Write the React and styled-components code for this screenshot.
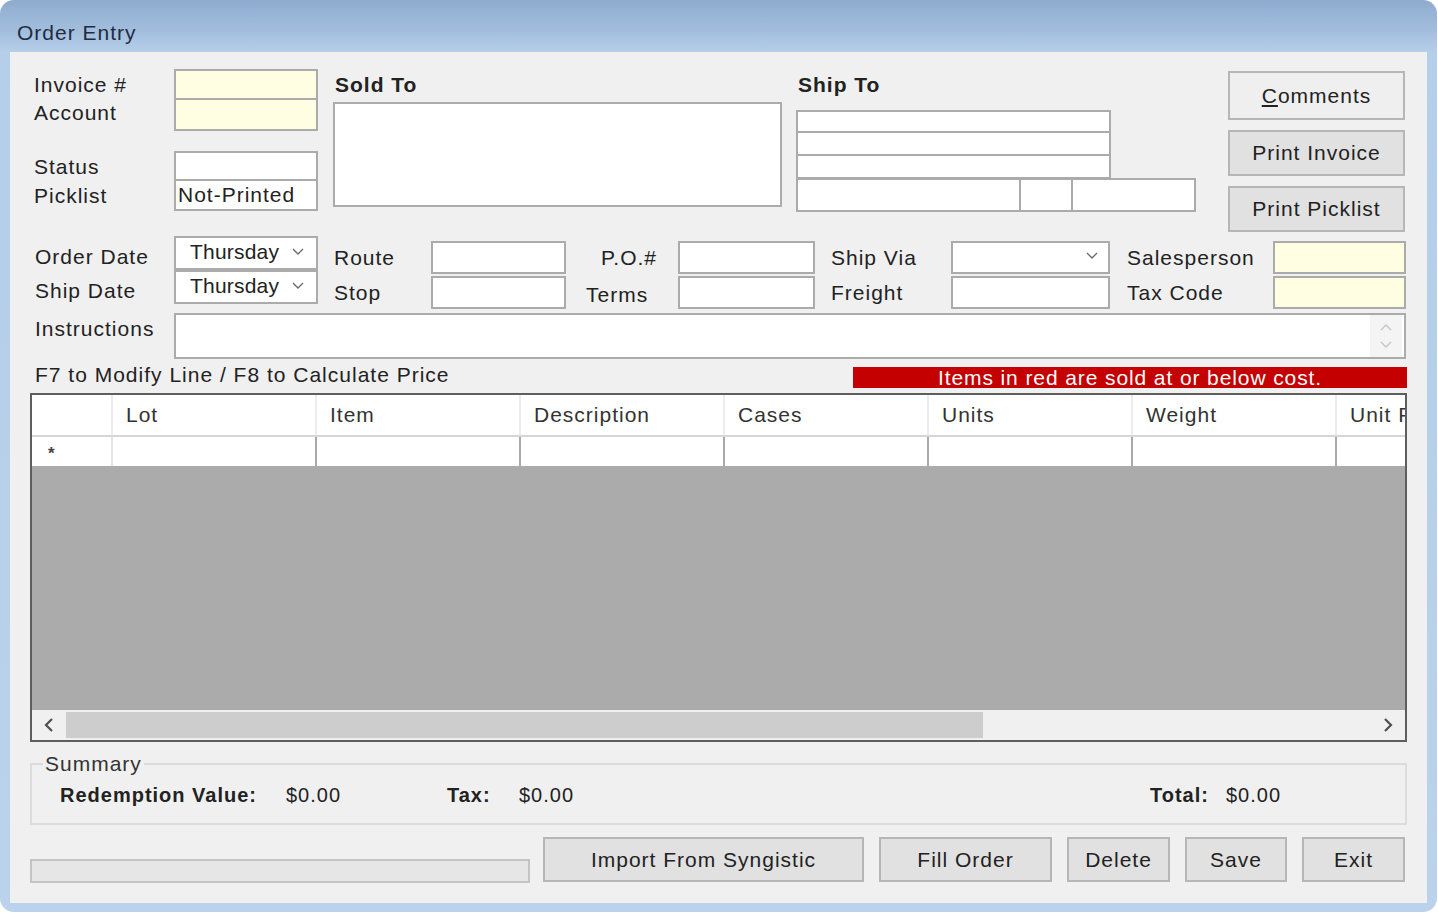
import React from 'react'
import styled, { createGlobalStyle } from 'styled-components'

const GlobalStyle = createGlobalStyle`
  html, body {
    margin: 0;
    padding: 0;
    background: #fff;
  }
  body {
    font-family: "Liberation Sans", Arial, sans-serif;
    font-size: 21px;
    letter-spacing: 1px;
    color: #222;
  }
  * { box-sizing: border-box; }
`

const Window = styled.div`
  width: 1437px;
  border-radius: 14px;
  padding: 0 10px 9px;
  display: flex;
  flex-direction: column;
  background: linear-gradient(180deg, #8eabcf 0px, #a2bddc 30px, #b5cee9 52px, #bad2eb 100%);
`

const TitleBar = styled.div`
  height: 52px;
  display: flex;
  align-items: center;
  padding: 14px 0 0 7px;
  color: #1f2d40;
`

const Client = styled.div`
  background: #f0f0f0;
  padding: 17px 20px 21px;
  display: flex;
  flex-direction: column;
`

const TopArea = styled.div`
  display: flex;
  align-items: flex-start;
  height: 163px;
`

const LeftFields = styled.div`
  display: flex;
  flex-direction: column;
  gap: 20px;
`

const Pair = styled.div`
  display: grid;
  grid-template-columns: ${p => p.$labelW}px ${p => p.$inputW}px;
  grid-auto-rows: ${p => p.$rowH}px;
  row-gap: ${p => p.$gap || 0}px;
  padding-top: ${p => p.$top || 0}px;
  margin-left: ${p => p.$ml || 0}px;
`

const Label = styled.span`
  display: flex;
  align-items: center;
  white-space: nowrap;
  padding-left: ${p => p.$indent || 0}px;
  padding-top: ${p => p.$dy || 0}px;
  padding-bottom: ${p => p.$db || 0}px;
`

const Box = styled.div`
  border: 2px solid #ababab;
  ${p => p.$joined && 'border-top: none;'}
  background: ${p => (p.$yellow ? '#fffee2' : '#fff')};
  width: ${p => (p.$w ? `${p.$w}px` : 'auto')};
  height: ${p => (p.$h ? `${p.$h}px` : 'auto')};
  display: flex;
  align-items: center;
  padding-left: 2px;
  overflow: hidden;
  white-space: nowrap;
`

const Block = styled.div`
  display: flex;
  flex-direction: column;
  width: ${p => p.$w}px;
  margin-left: ${p => p.$ml}px;
`

const Heading = styled.div`
  height: 32px;
  display: flex;
  align-items: center;
  font-weight: bold;
  padding-left: 2px;
  margin-bottom: 1px;
`

const ShipStack = styled.div`
  display: flex;
  flex-direction: column;
  margin-top: 8px;
`

const SplitRow = styled.div`
  display: flex;
  width: 400px;
  height: 34px;
  margin-top: -1px;
  border: 2px solid #ababab;
  background: #fff;
`

const SplitCell = styled.div`
  width: ${p => (p.$w ? `${p.$w}px` : 'auto')};
  flex: ${p => (p.$w ? 'none' : 1)};
  border-left: ${p => (p.$first ? 'none' : '2px solid #ababab')};
`

const ButtonCol = styled.div`
  margin-left: auto;
  margin-right: 2px;
  padding-top: 2px;
  display: flex;
  flex-direction: column;
  gap: 10px;
`

const Button = styled.button`
  width: ${p => p.$w}px;
  height: ${p => p.$h}px;
  margin-left: ${p => p.$ml || 0}px;
  border: 2px solid #b6b6b6;
  background: ${p => (p.$light ? '#efefef' : '#e1e1e1')};
  font: inherit;
  letter-spacing: inherit;
  color: #222;
  padding: 0;
  display: flex;
  align-items: center;
  justify-content: center;
`

const Row2 = styled.div`
  display: flex;
  align-items: flex-start;
  margin-top: 4px;
  height: 73px;
`

const SelectBox = styled(Box)`
  justify-content: space-between;
  padding: 0 ${p => p.$pr || 12}px 3px 14px;
  letter-spacing: 0.2px;
`

const InstrRow = styled.div`
  display: flex;
  margin-top: 4px;
`

const InstrLabel = styled.span`
  width: 144px;
  padding: 4px 0 0 5px;
  line-height: 24px;
`

const TextArea = styled(Box)`
  justify-content: flex-end;
  align-items: stretch;
  padding: 0;
`

const ScrollCol = styled.div`
  width: 32px;
  margin-right: 2px;
  background: #f4f4f4;
  display: flex;
  flex-direction: column;
  align-items: center;
  justify-content: space-around;
  padding: 4px 0;
`

const HintRow = styled.div`
  display: flex;
  align-items: flex-start;
  height: 32px;
`

const Hint = styled.span`
  padding-left: 5px;
  line-height: 32px;
`

const RedBar = styled.div`
  margin-left: auto;
  margin-top: 8px;
  width: 554px;
  height: 21px;
  background: #c40000;
  color: #fff;
  font-size: 21px;
  letter-spacing: 0.9px;
  line-height: 21px;
  text-align: center;
  overflow: hidden;
  white-space: nowrap;
`

const Grid = styled.div`
  margin-top: 2px;
  height: 349px;
  border: 2px solid #5e5e5e;
  display: flex;
  flex-direction: column;
  overflow: hidden;
`

const GridRow = styled.div`
  display: grid;
  grid-template-columns: 81px repeat(7, 204px);
  height: ${p => p.$h}px;
  background: #fff;
  border-bottom: ${p => (p.$head ? '2px solid #d6d6d6' : 'none')};
  flex: none;
`

const HeadCell = styled.div`
  border-right: 2px solid #ececec;
  padding-left: 13px;
  display: flex;
  align-items: center;
  color: #333;
  white-space: nowrap;
  overflow: hidden;
`

const DataCell = styled.div`
  border-right: 2px solid ${p => (p.$rowHead ? '#e6e6e6' : '#a9a9a9')};
  display: flex;
  align-items: center;
  padding: 5px 0 0 16px;
  font-size: 17px;
  font-weight: bold;
  color: #444;
`

const GrayArea = styled.div`
  flex: 1;
  background: #ababab;
`

const HScroll = styled.div`
  height: 30px;
  flex: none;
  display: flex;
  background: #f0f0f0;
`

const ArrowBtn = styled.div`
  width: 34px;
  display: flex;
  align-items: center;
  justify-content: center;
`

const Track = styled.div`
  flex: 1;
  padding: 2px 0;
`

const Thumb = styled.div`
  height: 100%;
  background: #cdcdcd;
`

const GroupBox = styled.fieldset`
  margin: 10px 0 0;
  padding: 6px 0 15px 11px;
  border: 2px solid #dcdcdc;
  min-width: 0;
`

const Legend = styled.legend`
  padding: 0 2px;
  line-height: 24px;
  color: #333;
`

const SummaryRow = styled.div`
  display: flex;
  align-items: center;
  height: 26px;
  padding-left: 17px;
  font-size: 20px;
`

const Slot = styled.span`
  width: ${p => (p.$w ? `${p.$w}px` : 'auto')};
  flex: ${p => (p.$w ? 'none' : 1)};
  font-weight: ${p => (p.$bold ? 'bold' : 'normal')};
  white-space: nowrap;
`

const BottomRow = styled.div`
  display: flex;
  align-items: flex-end;
  margin-top: 12px;
`

const Progress = styled.div`
  width: 500px;
  height: 24px;
  margin-bottom: -1px;
  background: #e6e6e6;
  border: 2px solid #c4c4c4;
`

const Chevron = ({ dir = 'down', color = '#6d6d6d' }) => {
  const pts = {
    down: '1,1 6,6 11,1',
    up: '1,6 6,1 11,6',
  }
  return (
    <svg width="12" height="8" viewBox="0 0 12 8">
      <polyline points={pts[dir]} fill="none" stroke={color} strokeWidth="1.4" />
    </svg>
  )
}

const ScrollArrow = ({ dir }) => (
  <svg width="10" height="14" viewBox="0 0 10 14">
    <polyline
      points={dir === 'left' ? '8,1 2,7 8,13' : '2,1 8,7 2,13'}
      fill="none"
      stroke="#505050"
      strokeWidth="2.2"
    />
  </svg>
)

const columns = ['Lot', 'Item', 'Description', 'Cases', 'Units', 'Weight', 'Unit Price']

const App = () => {
  return (
    <Window>
      <GlobalStyle />
      <TitleBar>Order Entry</TitleBar>
      <Client>
        <TopArea>
          <LeftFields>
            <Pair $labelW={144} $inputW={144} $rowH={31}>
              <Label $indent={4}>Invoice #</Label>
              <Box $yellow />
              <Label $indent={4} $db={5}>Account</Label>
              <Box $yellow $joined />
            </Pair>
            <Pair $labelW={144} $inputW={144} $rowH={30}>
              <Label $indent={4} $dy={2}>Status</Label>
              <Box />
              <Label $indent={4} $db={1}>Picklist</Label>
              <Box $joined>Not-Printed</Box>
            </Pair>
          </LeftFields>

          <Block $w={449} $ml={15}>
            <Heading>Sold To</Heading>
            <Box $h={105} />
          </Block>

          <Block $w={400} $ml={14}>
            <Heading>Ship To</Heading>
            <ShipStack>
              <Box $w={315} $h={23} />
              <Box $w={315} $h={23} $joined />
              <Box $w={315} $h={23} $joined />
              <SplitRow>
                <SplitCell $w={221} $first />
                <SplitCell $w={52} />
                <SplitCell />
              </SplitRow>
            </ShipStack>
          </Block>

          <ButtonCol>
            <Button $w={177} $h={49} $light>
              <span><u>C</u>omments</span>
            </Button>
            <Button $w={177} $h={46}>Print Invoice</Button>
            <Button $w={177} $h={46}>Print Picklist</Button>
          </ButtonCol>
        </TopArea>

        <Row2>
          <Pair $labelW={144} $inputW={144} $rowH={34}>
            <Label $indent={5} $dy={8}>Order Date</Label>
            <SelectBox>Thursday<Chevron /></SelectBox>
            <Label $indent={5} $dy={8}>Ship Date</Label>
            <SelectBox>Thursday<Chevron /></SelectBox>
          </Pair>
          <Pair $labelW={97} $inputW={135} $rowH={33} $gap={2} $top={5} $ml={16}>
            <Label>Route</Label>
            <Box />
            <Label>Stop</Label>
            <Box />
          </Pair>
          <Pair $labelW={92} $inputW={137} $rowH={33} $gap={2} $top={5} $ml={20}>
            <Label $indent={15}>P.O.#</Label>
            <Box />
            <Label $dy={4}>Terms</Label>
            <Box />
          </Pair>
          <Pair $labelW={120} $inputW={159} $rowH={33} $gap={2} $top={5} $ml={16}>
            <Label>Ship Via</Label>
            <SelectBox $pr={10}><span /><Chevron /></SelectBox>
            <Label>Freight</Label>
            <Box />
          </Pair>
          <Pair $labelW={146} $inputW={133} $rowH={33} $gap={2} $top={5} $ml={17}>
            <Label>Salesperson</Label>
            <Box $yellow />
            <Label>Tax Code</Label>
            <Box $yellow />
          </Pair>
        </Row2>

        <InstrRow>
          <InstrLabel>Instructions</InstrLabel>
          <TextArea $w={1232} $h={46}>
            <ScrollCol>
              <Chevron dir="up" color="#c4c4c4" />
              <Chevron dir="down" color="#c4c4c4" />
            </ScrollCol>
          </TextArea>
        </InstrRow>

        <HintRow>
          <Hint>F7 to Modify Line / F8 to Calculate Price</Hint>
          <RedBar>Items in red are sold at or below cost.</RedBar>
        </HintRow>

        <Grid>
          <GridRow $h={42} $head>
            <HeadCell />
            {columns.map(c => (
              <HeadCell key={c}>{c}</HeadCell>
            ))}
          </GridRow>
          <GridRow $h={29}>
            <DataCell $rowHead>*</DataCell>
            {columns.map(c => (
              <DataCell key={c} />
            ))}
          </GridRow>
          <GrayArea />
          <HScroll>
            <ArrowBtn><ScrollArrow dir="left" /></ArrowBtn>
            <Track>
              <Thumb style={{ width: '917px' }} />
            </Track>
            <ArrowBtn><ScrollArrow dir="right" /></ArrowBtn>
          </HScroll>
        </Grid>

        <GroupBox>
          <Legend>Summary</Legend>
          <SummaryRow>
            <Slot $w={226} $bold>Redemption Value:</Slot>
            <Slot $w={161}>$0.00</Slot>
            <Slot $w={72} $bold>Tax:</Slot>
            <Slot>$0.00</Slot>
            <Slot $w={76} $bold>Total:</Slot>
            <Slot $w={179}>$0.00</Slot>
          </SummaryRow>
        </GroupBox>

        <BottomRow>
          <Progress />
          <Button $w={321} $h={45} $ml={13}>Import From Syngistic</Button>
          <Button $w={173} $h={45} $ml={15}>Fill Order</Button>
          <Button $w={103} $h={45} $ml={15}>Delete</Button>
          <Button $w={102} $h={45} $ml={15}>Save</Button>
          <Button $w={103} $h={45} $ml={15}>Exit</Button>
        </BottomRow>
      </Client>
    </Window>
  )
}

export default App
